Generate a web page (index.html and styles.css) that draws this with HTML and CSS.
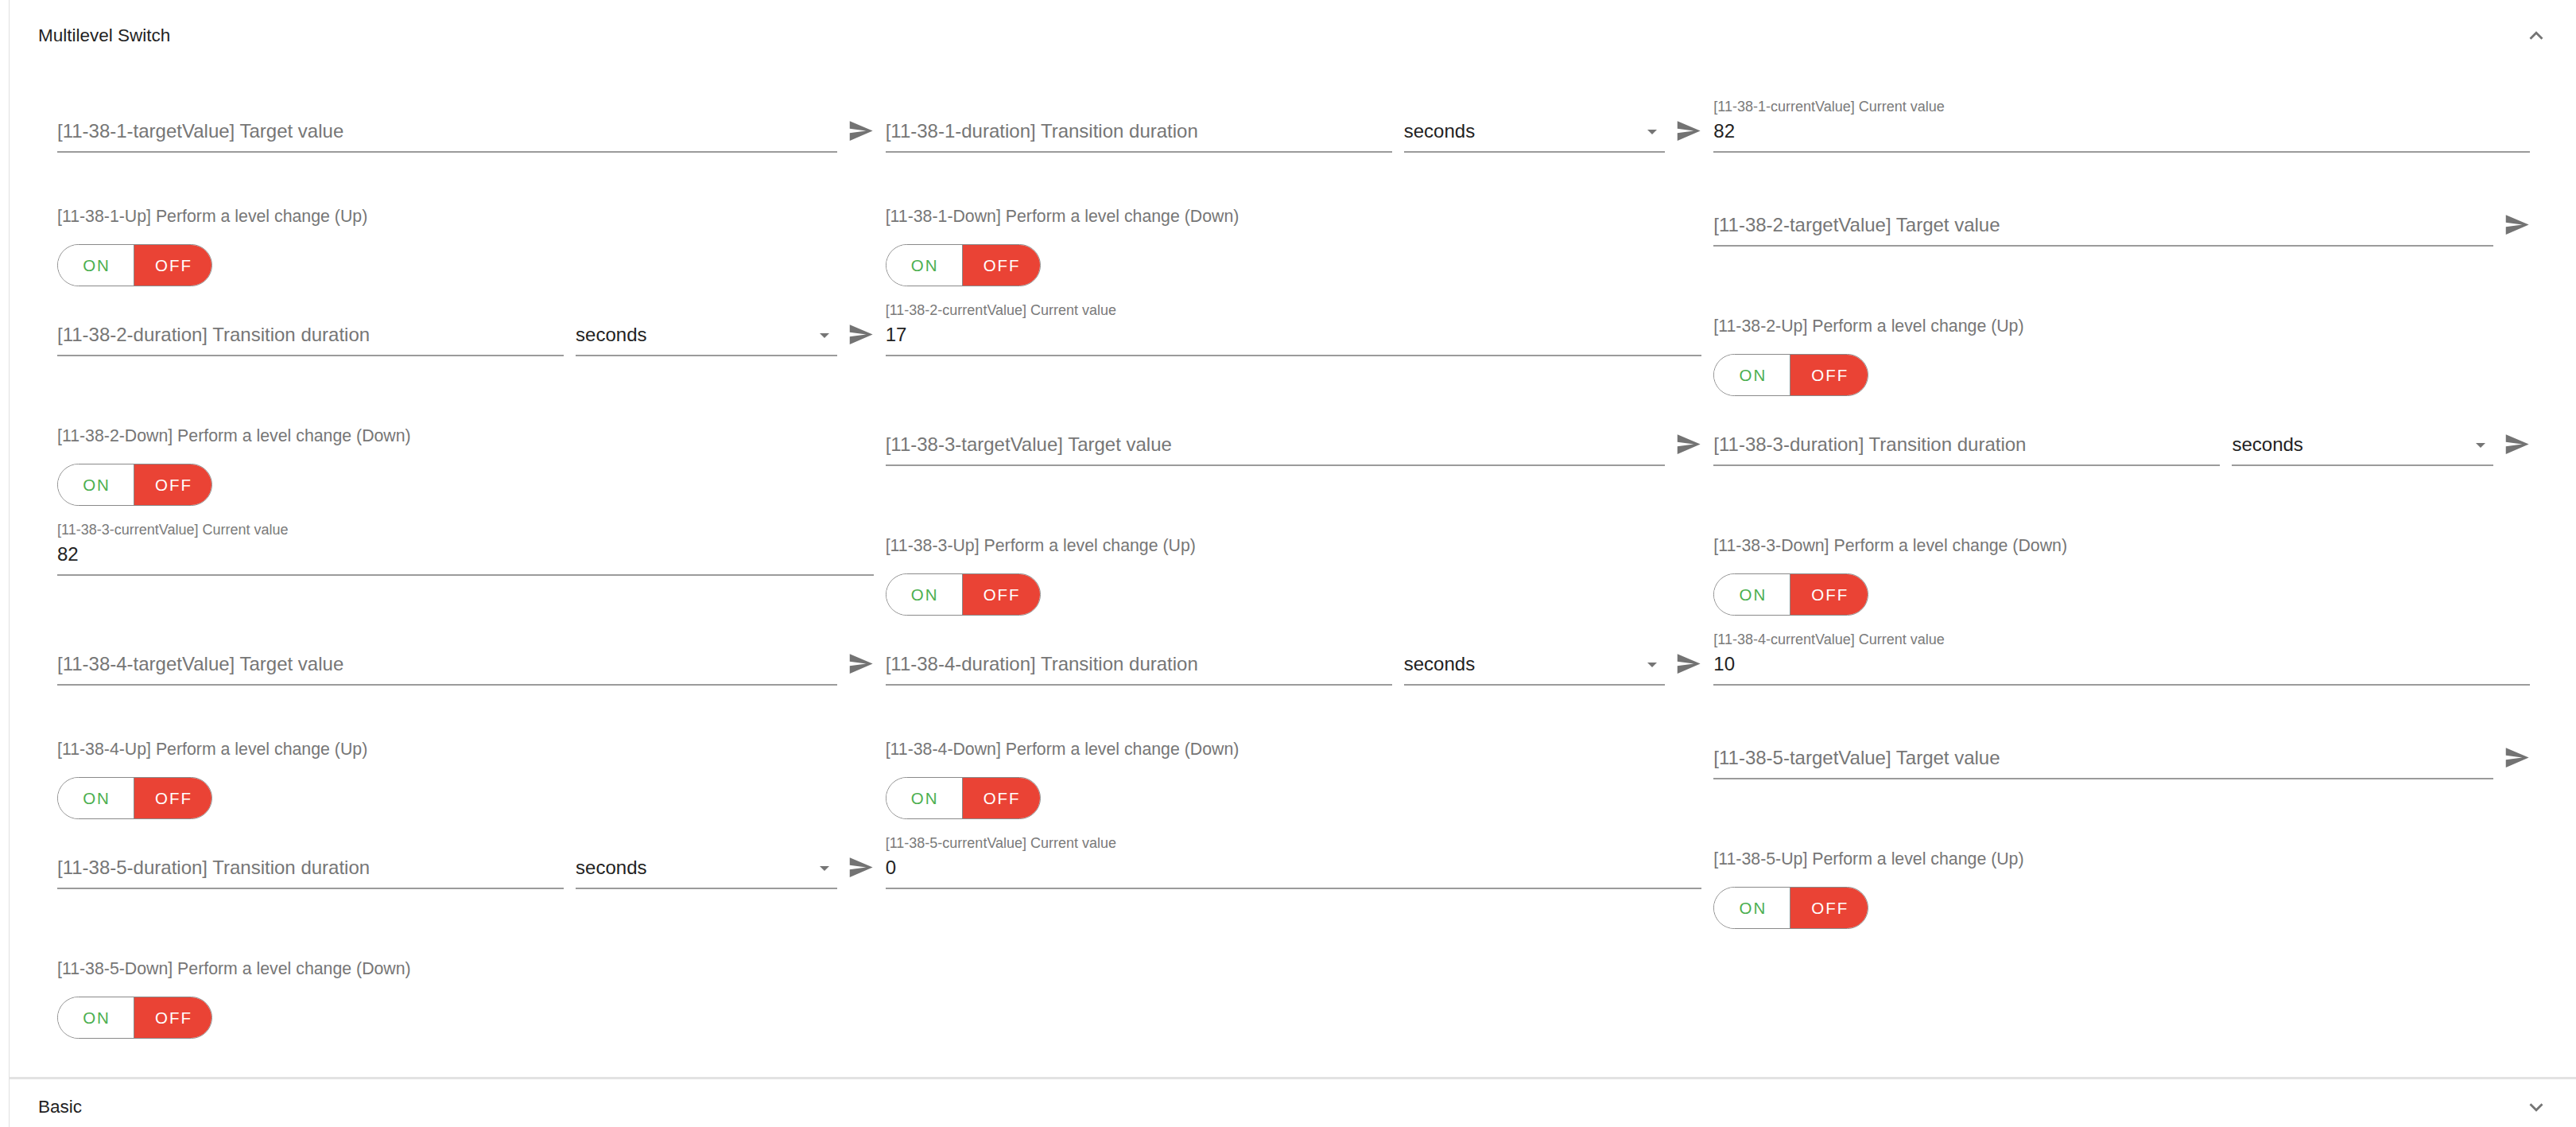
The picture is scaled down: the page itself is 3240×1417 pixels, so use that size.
FILE: index.html
```html
<!DOCTYPE html>
<html lang="en">
<head>
<meta charset="utf-8">
<title>Multilevel Switch</title>
<link rel="stylesheet" href="styles.css">
</head>
<body>
<div class="page">
  <section class="panel">
    <header class="panel-head">
      <span class="panel-title">Multilevel Switch</span>
      <svg class="chev" viewBox="0 0 24 24"><path d="M12 8l-6 6 1.41 1.41L12 10.83l4.59 4.58L18 14z"/></svg>
    </header>
    <div class="details">
      <div class="grid">
        <!-- 1 -->
        <div class="item fi"><div class="tf"><span class="ph">[11-38-1-targetValue] Target value</span></div><svg class="send" viewBox="0 0 24 24"><path d="M2.01 21L23 12 2.01 3 2 10l15 2-15 2z"/></svg></div>
        <div class="item fi"><div class="tf wide"><span class="ph">[11-38-1-duration] Transition duration</span></div><div class="sel"><span class="val">seconds</span><span class="caret"></span></div><svg class="send" viewBox="0 0 24 24"><path d="M2.01 21L23 12 2.01 3 2 10l15 2-15 2z"/></svg></div>
        <div class="item fi"><div class="tf lab"><div class="lbl">[11-38-1-currentValue] Current value</div><div class="val">82</div></div></div>
        <div class="item ti"><div class="tlbl">[11-38-1-Up] Perform a level change (Up)</div><div class="tg"><span class="on">ON</span><span class="off">OFF</span></div></div>
        <div class="item ti"><div class="tlbl">[11-38-1-Down] Perform a level change (Down)</div><div class="tg"><span class="on">ON</span><span class="off">OFF</span></div></div>
        <!-- 2 -->
        <div class="item fi"><div class="tf"><span class="ph">[11-38-2-targetValue] Target value</span></div><svg class="send" viewBox="0 0 24 24"><path d="M2.01 21L23 12 2.01 3 2 10l15 2-15 2z"/></svg></div>
        <div class="item fi"><div class="tf wide"><span class="ph">[11-38-2-duration] Transition duration</span></div><div class="sel"><span class="val">seconds</span><span class="caret"></span></div><svg class="send" viewBox="0 0 24 24"><path d="M2.01 21L23 12 2.01 3 2 10l15 2-15 2z"/></svg></div>
        <div class="item fi"><div class="tf lab"><div class="lbl">[11-38-2-currentValue] Current value</div><div class="val">17</div></div></div>
        <div class="item ti"><div class="tlbl">[11-38-2-Up] Perform a level change (Up)</div><div class="tg"><span class="on">ON</span><span class="off">OFF</span></div></div>
        <div class="item ti"><div class="tlbl">[11-38-2-Down] Perform a level change (Down)</div><div class="tg"><span class="on">ON</span><span class="off">OFF</span></div></div>
        <!-- 3 -->
        <div class="item fi"><div class="tf"><span class="ph">[11-38-3-targetValue] Target value</span></div><svg class="send" viewBox="0 0 24 24"><path d="M2.01 21L23 12 2.01 3 2 10l15 2-15 2z"/></svg></div>
        <div class="item fi"><div class="tf wide"><span class="ph">[11-38-3-duration] Transition duration</span></div><div class="sel"><span class="val">seconds</span><span class="caret"></span></div><svg class="send" viewBox="0 0 24 24"><path d="M2.01 21L23 12 2.01 3 2 10l15 2-15 2z"/></svg></div>
        <div class="item fi"><div class="tf lab"><div class="lbl">[11-38-3-currentValue] Current value</div><div class="val">82</div></div></div>
        <div class="item ti"><div class="tlbl">[11-38-3-Up] Perform a level change (Up)</div><div class="tg"><span class="on">ON</span><span class="off">OFF</span></div></div>
        <div class="item ti"><div class="tlbl">[11-38-3-Down] Perform a level change (Down)</div><div class="tg"><span class="on">ON</span><span class="off">OFF</span></div></div>
        <!-- 4 -->
        <div class="item fi"><div class="tf"><span class="ph">[11-38-4-targetValue] Target value</span></div><svg class="send" viewBox="0 0 24 24"><path d="M2.01 21L23 12 2.01 3 2 10l15 2-15 2z"/></svg></div>
        <div class="item fi"><div class="tf wide"><span class="ph">[11-38-4-duration] Transition duration</span></div><div class="sel"><span class="val">seconds</span><span class="caret"></span></div><svg class="send" viewBox="0 0 24 24"><path d="M2.01 21L23 12 2.01 3 2 10l15 2-15 2z"/></svg></div>
        <div class="item fi"><div class="tf lab"><div class="lbl">[11-38-4-currentValue] Current value</div><div class="val">10</div></div></div>
        <div class="item ti"><div class="tlbl">[11-38-4-Up] Perform a level change (Up)</div><div class="tg"><span class="on">ON</span><span class="off">OFF</span></div></div>
        <div class="item ti"><div class="tlbl">[11-38-4-Down] Perform a level change (Down)</div><div class="tg"><span class="on">ON</span><span class="off">OFF</span></div></div>
        <!-- 5 -->
        <div class="item fi"><div class="tf"><span class="ph">[11-38-5-targetValue] Target value</span></div><svg class="send" viewBox="0 0 24 24"><path d="M2.01 21L23 12 2.01 3 2 10l15 2-15 2z"/></svg></div>
        <div class="item fi"><div class="tf wide"><span class="ph">[11-38-5-duration] Transition duration</span></div><div class="sel"><span class="val">seconds</span><span class="caret"></span></div><svg class="send" viewBox="0 0 24 24"><path d="M2.01 21L23 12 2.01 3 2 10l15 2-15 2z"/></svg></div>
        <div class="item fi"><div class="tf lab"><div class="lbl">[11-38-5-currentValue] Current value</div><div class="val">0</div></div></div>
        <div class="item ti"><div class="tlbl">[11-38-5-Up] Perform a level change (Up)</div><div class="tg"><span class="on">ON</span><span class="off">OFF</span></div></div>
        <div class="item ti"><div class="tlbl">[11-38-5-Down] Perform a level change (Down)</div><div class="tg"><span class="on">ON</span><span class="off">OFF</span></div></div>
      </div>
    </div>
  </section>
  <section class="panel collapsed">
    <header class="panel-head small">
      <span class="panel-title">Basic</span>
      <svg class="chev" viewBox="0 0 24 24"><path d="M16.59 8.59L12 13.17 7.41 8.59 6 10l6 6 6-6z"/></svg>
    </header>
  </section>
</div>
</body>
</html>
```

FILE: styles.css
```css
* { box-sizing: border-box; }
html, body { margin: 0; padding: 0; background: #fff; }
body {
  font-family: "Liberation Sans", Arial, Helvetica, sans-serif;
  color: rgba(0, 0, 0, 0.87);
  width: 3240px;
  height: 1417px;
  overflow: hidden;
}
.page { padding-left: 11px; }
.panel {
  border-left: 1px solid #e0e0e0;
  background: #fff;
}
.panel.collapsed { border-top: 3px solid #e2e2e2; }
.panel-head {
  height: 90px;
  display: flex;
  align-items: center;
  justify-content: space-between;
  padding: 0 33px 0 36px;
}
.panel-head.small { height: 70px; }
.panel-title { font-size: 22.5px; line-height: 30px; color: #1f1f1f; }
.chev { width: 34px; height: 34px; fill: #757575; flex: none; }

.details { padding: 16px 0 46px 60px; }
.grid {
  width: 3125px;
  display: grid;
  grid-template-columns: repeat(3, 1fr);
  align-items: start;
}
.item { padding-right: 15px; min-width: 0; }

/* text-field items */
.fi { height: 118px; display: flex; align-items: flex-start; }
.tf {
  flex: 1;
  min-width: 0;
  padding: 44px 0 10px;
  border-bottom: 2px solid #9b9b9b;
  font-size: 24px;
  line-height: 30px;
  white-space: nowrap;
}
.tf.wide { flex: 2; }
.tf.lab { padding-top: 18px; }
.lbl { font-size: 18px; line-height: 20px; margin-bottom: 6px; color: #7a7a7a; }
.ph { color: #767676; }
.val { color: #222; }
.sel {
  flex: 1;
  min-width: 0;
  margin-left: 15px;
  padding: 44px 10px 10px 0;
  border-bottom: 2px solid #9b9b9b;
  font-size: 24px;
  line-height: 30px;
  display: flex;
  align-items: center;
  justify-content: space-between;
}
.caret {
  width: 0;
  height: 0;
  border-left: 6px solid transparent;
  border-right: 6px solid transparent;
  border-top: 6px solid #757575;
  margin-top: 2px;
}
.send {
  flex: none;
  width: 33px;
  height: 33px;
  margin: 42px 0 0 13px;
  fill: #737373;
}

/* toggle items */
.ti { height: 138px; padding-top: 35px; }
.tlbl { font-size: 21.3px; line-height: 26px; color: #767676; white-space: nowrap; }
.tg {
  margin-top: 22px;
  width: 195px;
  height: 53px;
  display: flex;
  border: 1.5px solid #8a8a8a;
  border-radius: 27px;
  overflow: hidden;
  font-size: 20.5px;
  letter-spacing: 2px;
}
.tg .on, .tg .off {
  display: flex;
  align-items: center;
  justify-content: center;
  padding-left: 2px;
}
.tg .on { width: 95px; color: #4caf50; background: #fff; }
.tg .off { flex: 1; color: #fff; background: #ea4335; border-left: 1.5px solid #8a8a8a; }
```
